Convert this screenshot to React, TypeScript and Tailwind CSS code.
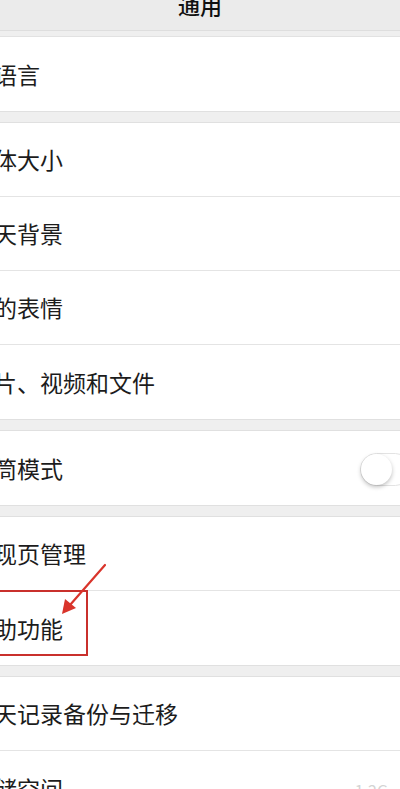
import React from "react";

const font = { fontFamily: '"Noto Sans CJK SC", "Noto Sans", sans-serif' };

function Row({ label, last, right }: { label: string; last?: boolean; right?: React.ReactNode }) {
  return (
    <div className={`relative flex h-[74px] items-center bg-white ${last ? "" : "border-b border-[#e4e4e4]"}`}>
      <span className="ml-[-29px] whitespace-nowrap text-[23px] leading-none text-[#1c1c1c]">{label}</span>
      {right}
    </div>
  );
}

function Gap() {
  return <div className="h-[12px] border-y border-[#e0e0e0] bg-[#efefef]" />;
}

export default function App() {
  return (
    <div className="relative h-[789px] w-[400px] overflow-hidden bg-[#efefef]" style={font}>
      <div className="flex h-[31px] justify-center overflow-hidden border-b border-[#dedede] bg-[#ebebeb]">
        <span className="mt-[-7px] text-[22px] font-medium leading-[22px] text-[#111]">通用</span>
      </div>
      <div className="h-[6px] border-b border-[#e2e2e2] bg-[#efefef]" />
      <Row label="多语言" last />
      <Gap />
      <Row label="字体大小" />
      <Row label="聊天背景" />
      <Row label="我的表情" />
      <Row label="照片、视频和文件" last />
      <Gap />
      <Row
        label="听筒模式"
        last
        right={
          <div className="absolute left-[360px] top-[22px] flex h-[33px] w-[52px] items-center rounded-full border-[1.5px] border-[#e3e3e3] bg-white">
            <div className="h-[31px] w-[31px] rounded-full bg-white shadow-[0_2px_4px_rgba(0,0,0,0.25)]" />
          </div>
        }
      />
      <Gap />
      <Row label="发现页管理" />
      <Row label="辅助功能" last />
      <Gap />
      <Row label="聊天记录备份与迁移" />
      <Row
        label="存储空间"
        last
        right={<span className="absolute right-[12px] top-[31px] text-[16px] leading-none text-[#d4d4d4]">1.2G</span>}
      />

      <div className="absolute left-[-10px] top-[590px] h-[66px] w-[98px] border-2 border-[#c9302c]" />
      <svg className="absolute left-0 top-0" width="400" height="789" viewBox="0 0 400 789">
        <line x1="105" y1="565" x2="70" y2="605" stroke="#d9342b" strokeWidth="2.2" strokeLinecap="round" />
        <polygon points="62,614 65,599 76,608" fill="#d9342b" />
      </svg>
    </div>
  );
}
